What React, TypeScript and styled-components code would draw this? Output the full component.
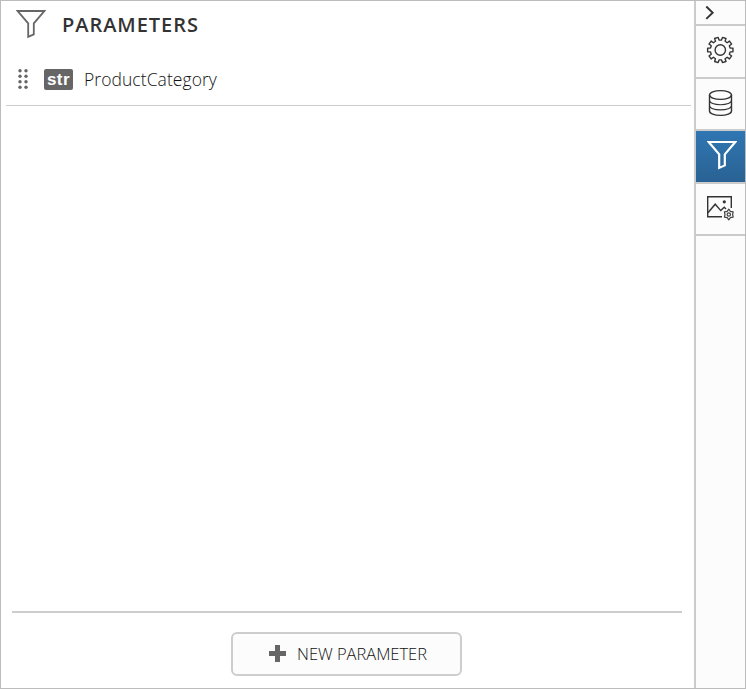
import React from "react";
import styled, { createGlobalStyle } from "styled-components";

const GlobalStyle = createGlobalStyle`
  *, *::before, *::after { box-sizing: border-box; }
  html, body { margin: 0; padding: 0; background: #fff; }
  svg { display: block; flex: none; }
`;

const Frame = styled.div`
  display: flex;
  width: 746px;
  height: 689px;
  border: 1px solid #bcbcbc;
  background: #fff;
  color: #333;
  font-family: "Open Sans", "Noto Sans", sans-serif;
`;

const Panel = styled.main`
  flex: 1;
  min-width: 0;
  display: flex;
  flex-direction: column;
`;

const Header = styled.header`
  display: flex;
  align-items: center;
  gap: 16px;
  height: 52px;
  padding: 0 0 6px 15px;
`;

const Title = styled.h1`
  margin: 0;
  padding-top: 1px;
  font-size: 20px;
  line-height: 28px;
  font-weight: 600;
  letter-spacing: 0.95px;
  color: #333;
`;

const ParameterRow = styled.div`
  display: flex;
  align-items: center;
  height: 53px;
  margin: 0 3px 0 5px;
  padding-left: 11px;
  border-bottom: 1px solid #cdcdcd;
`;

const TypeBadge = styled.span`
  width: 29px;
  height: 21px;
  margin: 0 11px 0 15px;
  border-radius: 2px;
  background: #666;
  color: #fff;
  font: bold 17px/21px "Liberation Sans", Arial, sans-serif;
  letter-spacing: 0.5px;
  text-align: center;
`;

const ParameterName = styled.span`
  color: #111;
  font-size: 17.5px;
  line-height: 24px;
  font-weight: 300;
  letter-spacing: 0.06px;
`;

const Footer = styled.footer`
  display: flex;
  justify-content: center;
  height: 77px;
  margin: auto 12px 0 11px;
  padding: 19px 2px 0 0;
  border-top: 2px solid #cdcdcd;
`;

const NewButton = styled.button`
  display: flex;
  align-items: center;
  justify-content: center;
  gap: 11px;
  width: 231px;
  height: 44px;
  padding: 0 0 0 4px;
  border: 2px solid #cdcdcd;
  border-radius: 6px;
  background: #fcfcfc;
  color: #111;
  font: 300 16.5px/22px "Open Sans", "Noto Sans", sans-serif;
  letter-spacing: -0.03px;
  white-space: nowrap;
`;

const Sidebar = styled.nav`
  display: flex;
  flex-direction: column;
  width: 51px;
  border-left: 2px solid #cbcbcb;
  background: #fcfcfc;
`;

const Tab = styled.button<{ $height: number; $active?: boolean }>`
  display: flex;
  align-items: flex-start;
  justify-content: flex-start;
  box-sizing: content-box;
  height: ${(p) => p.$height}px;
  padding: 0 0 0 ${(p) => (p.$active ? 11 : 10)}px;
  border: 0;
  border-bottom: 2px solid #cbcbcb;
  background: ${(p) => (p.$active ? "linear-gradient(#2f76b3, #2a6293)" : "#fcfcfc")};

  svg { margin-top: ${(p) => (p.$active ? 9 : 10)}px; }
`;

const Collapse = styled(Tab)`
  padding-left: 8px;

  svg { margin-top: 4px; }
`;

function FilterIcon({ color, weight }: { color: string; weight: number }) {
  return (
    <svg width="30" height="30" viewBox="0 0 30 30" fill="none" stroke={color} strokeWidth={weight}>
      <path d="M1.7 2H28.3L17.8 14.3V25.4L12.2 27.9V14.3Z" />
    </svg>
  );
}

function gearPath(teeth: number, outer: number, inner: number) {
  const step = (Math.PI * 2) / teeth;
  const points: string[] = [];
  for (let i = 0; i < teeth; i++) {
    const middle = i * step + step / 2;
    const corners = [[-0.3, inner], [-0.23, outer], [0.23, outer], [0.3, inner]];
    corners.forEach(([offset, radius]) => {
      const angle = middle + offset * step;
      points.push(`${(14.3 + radius * Math.sin(angle)).toFixed(2)} ${(14 - radius * Math.cos(angle)).toFixed(2)}`);
    });
  }
  return `M${points.join("L")}Z`;
}

function GearIcon() {
  return (
    <svg width="28" height="28" viewBox="0 0 28 28" fill="none" stroke="#333" strokeWidth="1.4" strokeLinejoin="round">
      <path d={gearPath(10, 12.8, 10)} />
      <circle cx="14.3" cy="14" r="5.2" />
    </svg>
  );
}

function DatabaseIcon() {
  return (
    <svg width="28" height="28" viewBox="0 0 28 28" fill="none" stroke="#333" strokeWidth="1.4">
      <ellipse cx="14.5" cy="6" rx="11" ry="4.4" />
      <path d="M3.5 6V22C3.5 24.6 8.3 26.4 14.5 26.4S25.5 24.6 25.5 22V6" />
      <path strokeWidth="1.1" d="M3.5 11.5C3.5 14 8.3 15.7 14.5 15.7S25.5 14 25.5 11.5M3.5 16.7C3.5 19.2 8.3 20.9 14.5 20.9S25.5 19.2 25.5 16.7" />
    </svg>
  );
}

function ImageSettingsIcon() {
  return (
    <svg width="29" height="28" viewBox="0 -1 29 28" fill="none" stroke="#333" strokeWidth="1.4">
      <path d="M16 21.8H1.7V1.7H25.3V13" />
      <path d="M2 17.8L9.2 9.2L14.8 15.6L18.2 12.2L20 14" />
      <circle cx="18.3" cy="6.8" r="1.6" fill="#333" stroke="none" />
      <g stroke="#444" strokeWidth="1.2" strokeLinejoin="round">
        <path d="M22.8 14.2L24.4 16.3L27.2 16.8L26.6 19.5L27.2 22.2L24.4 22.7L22.8 24.8L21.2 22.7L18.4 22.2L19 19.5L18.4 16.8L21.2 16.3Z" />
        <circle cx="22.8" cy="19.5" r="1.7" />
      </g>
    </svg>
  );
}

function DragHandle() {
  return (
    <svg width="12" height="22" viewBox="0 0 12 22" fill="#666">
      {[2.7, 8.2, 13.8, 19.3].map((y) => (
        <React.Fragment key={y}>
          <circle cx="3" cy={y} r="1.7" />
          <circle cx="9" cy={y} r="1.7" />
        </React.Fragment>
      ))}
    </svg>
  );
}

export default function App() {
  return (
    <>
      <GlobalStyle />
      <Frame>
        <Panel>
          <Header>
            <FilterIcon color="#666" weight={1.8} />
            <Title>PARAMETERS</Title>
          </Header>
          <ParameterRow>
            <DragHandle />
            <TypeBadge>str</TypeBadge>
            <ParameterName>ProductCategory</ParameterName>
          </ParameterRow>
          <Footer>
            <NewButton>
              <svg width="17" height="18" viewBox="0 0 17 18" fill="#666">
                <path d="M6 0H11V6H17V11H11V17H6V11H0V6H6Z" />
              </svg>
              NEW PARAMETER
            </NewButton>
          </Footer>
        </Panel>
        <Sidebar>
          <Collapse $height={23} aria-label="Collapse">
            <svg width="12" height="15" viewBox="0 0 12 15" fill="none" stroke="#333" strokeWidth="1.9">
              <path d="M2.3 1.5L8.7 7.7L2.3 13.9" />
            </svg>
          </Collapse>
          <Tab $height={51} aria-label="Properties"><GearIcon /></Tab>
          <Tab $height={50} aria-label="Data"><DatabaseIcon /></Tab>
          <Tab $height={51} $active aria-label="Parameters"><FilterIcon color="#fff" weight={2.2} /></Tab>
          <Tab $height={50} aria-label="Image manager"><ImageSettingsIcon /></Tab>
        </Sidebar>
      </Frame>
    </>
  );
}
